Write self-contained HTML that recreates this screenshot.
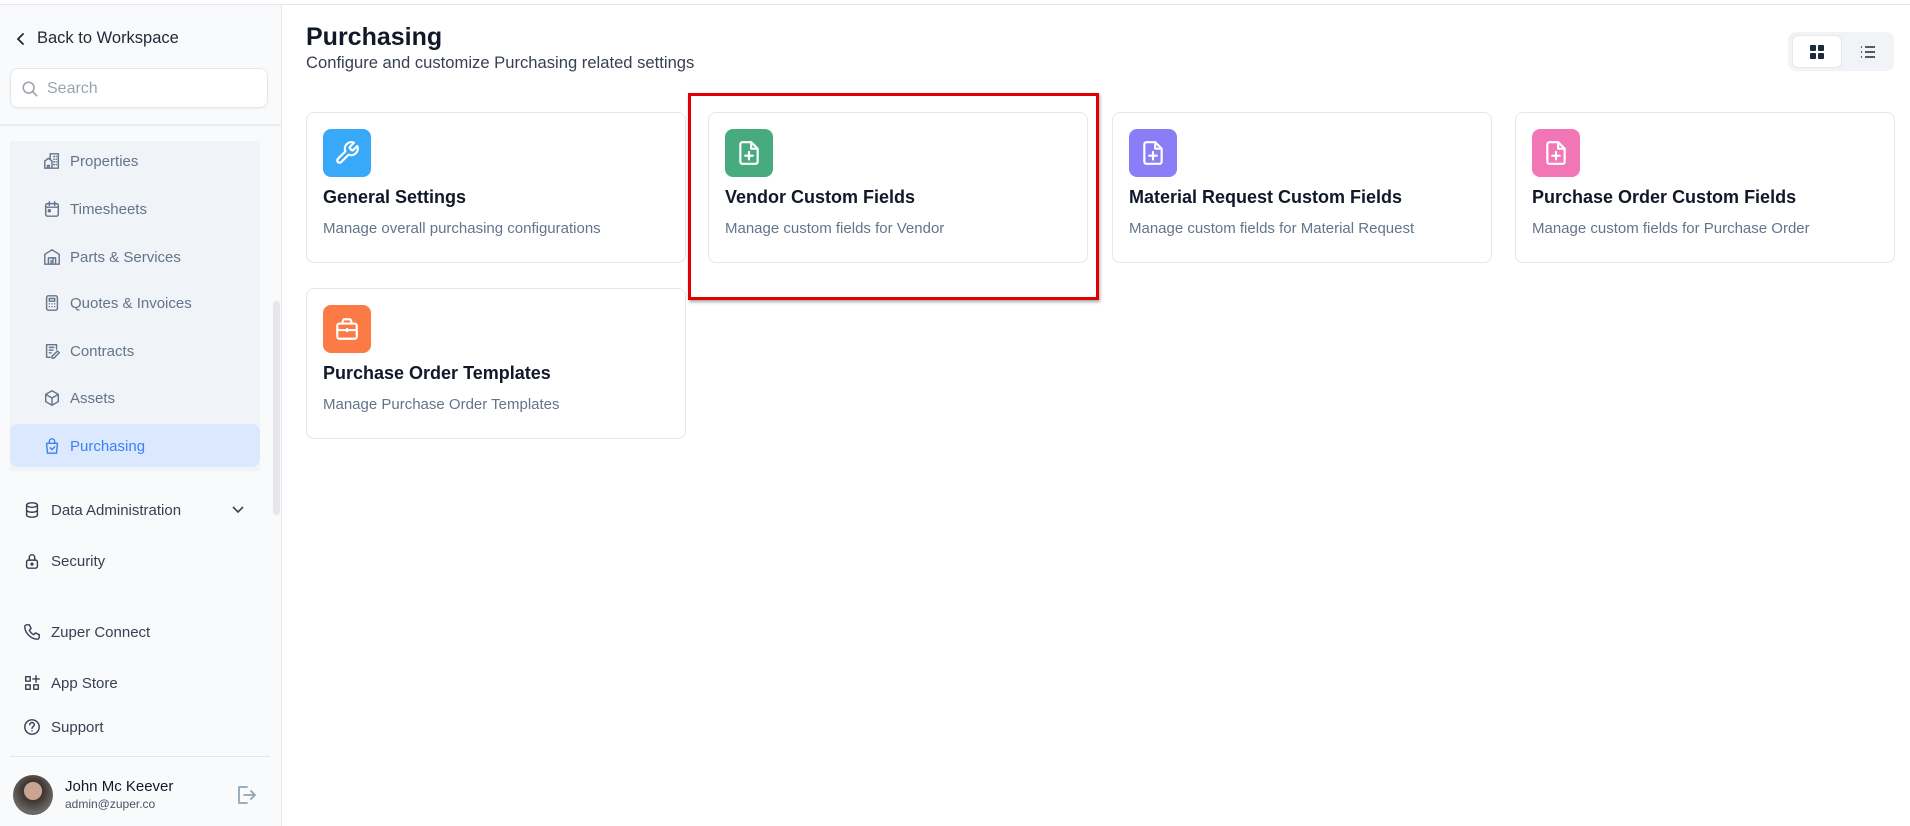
<!DOCTYPE html>
<html><head><meta charset="utf-8"><style>
*{box-sizing:border-box;margin:0;padding:0}
body{width:1910px;height:826px;overflow:hidden;background:#fff;font-family:"Liberation Sans",sans-serif;position:relative;color:#111827}
.abs{position:absolute}
.topline{left:0;top:0;width:1910px;height:5px;border-bottom:1px solid #e5e7eb;background:#fff}
.side{left:0;top:5px;width:282px;height:821px;background:#f8fafc;border-right:1px solid #e5e7eb}
.back{left:15px;top:29px;font-size:16.5px;color:#1f2937;display:flex;align-items:center;gap:10px}
.search{left:10px;top:68px;width:258px;height:40px;background:#fff;border:1px solid #e5e7eb;border-radius:8px;box-shadow:0 1px 2px rgba(0,0,0,.05);display:flex;align-items:center;padding-left:10px;padding-top:2px;gap:8px;color:#9ca3af;font-size:16px}
.sep1{left:0;top:124px;width:281px;height:2px;background:#e9ecf0}
.group{left:10px;top:141px;width:250px;height:330px;background:#f0f3f8}
.nav{position:absolute;left:43px;display:flex;align-items:center;gap:9px;font-size:15px;color:#64748b;height:20px}
.nav svg{width:18px;height:18px;fill:none;stroke:#64748b;stroke-width:1.6;stroke-linecap:round;stroke-linejoin:round}
.active{left:10px;top:424px;width:250px;height:43px;background:#dbe8fd;border-radius:8px}
.nav.act{color:#3b82f6}.nav.act svg{stroke:#3b82f6}
.nav2{position:absolute;left:23px;display:flex;align-items:center;gap:10px;font-size:15px;color:#374151;height:20px}
.nav2 svg{width:18px;height:18px;fill:none;stroke:#374151;stroke-width:1.6;stroke-linecap:round;stroke-linejoin:round}
.scroll{left:273px;top:301px;width:7px;height:214px;background:#e5e7eb;border-radius:4px}
.sep2{left:10px;top:756px;width:260px;height:1px;background:#e2e5ea}
h1{position:absolute;left:306px;top:23px;font-size:25px;font-weight:bold;color:#111827}
.sub{left:306px;top:53px;font-size:16.6px;color:#374151}
.toggle{left:1788px;top:32px;width:106px;height:39px;background:#f1f3f6;border-radius:8px}
.tg1{left:1792px;top:35px;width:50px;height:33px;background:#fff;border-radius:6px;border:1px solid #e5e7eb}
.card{position:absolute;width:380px;height:151px;border:1px solid #e5e7eb;border-radius:8px;background:#fff}
.card .ic{position:absolute;left:16px;top:16px;width:48px;height:48px;border-radius:8px;display:flex;align-items:center;justify-content:center}
.card .ic svg{width:26px;height:26px;fill:none;stroke:#fff;stroke-width:2;stroke-linecap:round;stroke-linejoin:round}
.card .t{position:absolute;left:16px;top:74px;font-size:18px;font-weight:bold;color:#111827}
.card .d{position:absolute;left:16px;top:107px;font-size:15px;color:#64748b}
.red{left:688px;top:93px;width:411px;height:207px;border:3px solid #e00000;box-shadow:1px 2px 3px rgba(0,0,0,.35)}
</style></head><body>
<div class="abs topline"></div>
<div class="abs side"></div>
<div class="abs back"><svg width="12" height="14" viewBox="0 0 12 14"><path d="M8 2 L3 7 L8 12" fill="none" stroke="#1f2937" stroke-width="1.8" stroke-linecap="round"/></svg>Back to Workspace</div>
<div class="abs search"><svg width="18" height="18" viewBox="0 0 20 20" fill="none" stroke="#9ca3af" stroke-width="1.8"><circle cx="8.5" cy="8.5" r="6"/><path d="M13 13l5 5"/></svg>Search</div>
<div class="abs sep1"></div>
<div class="abs group"></div>
<div class="abs active"></div>
<div class="abs scroll"></div>
<div class="nav" style="top:151px"><svg viewBox="0 0 20 20"><path d="M2 18V10l4-3 4 3v8H2zM8 8V2h9v16h-7M12 5h1M15 5h0M12 8h1M15 8h0M12 11h1M15 11h0M12 14h1M15 14h0M5 18v-3h2v3"/></svg>Properties</div>
<div class="nav" style="top:199px"><svg viewBox="0 0 20 20"><rect x="3" y="4" width="14" height="14" rx="2"/><path d="M3 8h14M7 2v4M13 2v4"/><rect x="6" y="11" width="2" height="2" fill="#64748b"/></svg>Timesheets</div>
<div class="nav" style="top:247px"><svg viewBox="0 0 20 20"><path d="M2 18V7l8-5 8 5v11H2zM6 18v-7h8v7M9 14v4M11 11v7"/></svg>Parts &amp; Services</div>
<div class="nav" style="top:293px"><svg viewBox="0 0 20 20"><rect x="4" y="2" width="12" height="16" rx="2"/><rect x="7" y="5" width="6" height="3"/><path d="M7 11h0M10 11h0M13 11h0M7 14h0M10 14h0M13 14h0"/></svg>Quotes &amp; Invoices</div>
<div class="nav" style="top:341px"><svg viewBox="0 0 20 20"><path d="M15 8V3H4v14h4M7 6h5M7 9h4M7 12h2M12 18l6-6-2-2-6 6v2h2z"/></svg>Contracts</div>
<div class="nav" style="top:388px"><svg viewBox="0 0 20 20"><path d="M10 2l7 4v8l-7 4-7-4V6l7-4zM3 6l7 4 7-4M10 10v8"/></svg>Assets</div>
<div class="nav act" style="top:436px"><svg viewBox="0 0 20 20"><path d="M4 7h12l-1 11H5L4 7zM7 7V5a3 3 0 016 0v2M8 12l2 2 3-3"/></svg>Purchasing</div>
<div class="nav2" style="top:500px"><svg viewBox="0 0 20 20"><ellipse cx="10" cy="4.5" rx="6" ry="2.5"/><path d="M4 4.5v11c0 1.4 2.7 2.5 6 2.5s6-1.1 6-2.5v-11M4 10c0 1.4 2.7 2.5 6 2.5s6-1.1 6-2.5"/></svg>Data Administration</div>
<svg class="abs" style="left:231px;top:504px" width="14" height="12" viewBox="0 0 14 12"><path d="M2 3l5 5 5-5" fill="none" stroke="#374151" stroke-width="1.6"/></svg>
<div class="nav2" style="top:551px"><svg viewBox="0 0 20 20"><rect x="4" y="9" width="12" height="9" rx="2"/><path d="M7 9V6a3 3 0 016 0v3"/><circle cx="10" cy="13.5" r="1" fill="#374151"/></svg>Security</div>
<div class="nav2" style="top:622px"><svg viewBox="0 0 20 20"><path d="M4 2h3l2 4-2 2c1 2 3 4 5 5l2-2 4 2v3c0 1-1 2-2 2C9 18 2 11 2 4c0-1 1-2 2-2z"/></svg>Zuper Connect</div>
<div class="nav2" style="top:673px"><svg viewBox="0 0 20 20"><rect x="3" y="3" width="5" height="5"/><rect x="3" y="12" width="5" height="5"/><rect x="12" y="12" width="5" height="5"/><path d="M14.5 2v7M11 5.5h7"/></svg>App Store</div>
<div class="nav2" style="top:717px"><svg viewBox="0 0 20 20"><circle cx="10" cy="10" r="8"/><path d="M7.5 7.5a2.5 2.5 0 115 0c0 2-2.5 2-2.5 4M10 14.5v0"/></svg>Support</div>
<div class="abs sep2"></div>
<div class="abs" style="left:13px;top:775px;width:40px;height:40px;border-radius:50%;background:radial-gradient(circle at 50% 40%,#c9a58f 0 28%,#3a3330 30%,#6f6a66 70%,#222 100%)"></div>
<div class="abs" style="left:65px;top:778px;font-size:15px;color:#111827">John Mc Keever</div>
<div class="abs" style="left:65px;top:797px;font-size:12px;color:#4b5563">admin@zuper.co</div>
<svg class="abs" style="left:235px;top:784px" width="22" height="22" viewBox="0 0 22 22" fill="none" stroke="#94a3b8" stroke-width="1.8" stroke-linecap="round" stroke-linejoin="round"><path d="M12 3H4v16h8M9 11h11M16 7l4 4-4 4"/></svg>

<h1>Purchasing</h1>
<div class="abs sub">Configure and customize Purchasing related settings</div>
<div class="abs toggle"></div><div class="abs tg1"></div>
<svg class="abs" style="left:1809px;top:44px" width="16" height="16" viewBox="0 0 16 16" fill="#1e293b"><rect x="1" y="1" width="6" height="6" rx="1"/><rect x="9" y="1" width="6" height="6" rx="1"/><rect x="1" y="9" width="6" height="6" rx="1"/><rect x="9" y="9" width="6" height="6" rx="1"/></svg>
<svg class="abs" style="left:1860px;top:44px" width="16" height="16" viewBox="0 0 16 16" stroke="#1e293b" stroke-width="1.6"><path d="M1 3h1M5 3h10M1 8h1M5 8h10M1 13h1M5 13h10"/></svg>

<div class="card" style="left:306px;top:112px"><div class="ic" style="background:#38a9f8"><svg viewBox="0 0 24 24"><path d="M14.7 6.3a1 1 0 000 1.4l1.6 1.6a1 1 0 001.4 0l3.77-3.77a6 6 0 01-7.940 7.94l-6.91 6.91a2.12 2.12 0 01-3-3l6.91-6.91a6 6 0 017.94-7.94l-3.76 3.76z"/></svg></div><div class="t">General Settings</div><div class="d">Manage overall purchasing configurations</div></div>
<div class="card" style="left:708px;top:112px"><div class="ic" style="background:#48ab80"><svg viewBox="0 0 24 24"><path d="M14 2H6a2 2 0 00-2 2v16a2 2 0 002 2h12a2 2 0 002-2V8z"/><path d="M14 2v6h6M12 11v7M8.5 14.5h7"/></svg></div><div class="t">Vendor Custom Fields</div><div class="d">Manage custom fields for Vendor</div></div>
<div class="card" style="left:1112px;top:112px"><div class="ic" style="background:#8b7cf8"><svg viewBox="0 0 24 24"><path d="M14 2H6a2 2 0 00-2 2v16a2 2 0 002 2h12a2 2 0 002-2V8z"/><path d="M14 2v6h6M12 11v7M8.5 14.5h7"/></svg></div><div class="t">Material Request Custom Fields</div><div class="d">Manage custom fields for Material Request</div></div>
<div class="card" style="left:1515px;top:112px"><div class="ic" style="background:#f276b6"><svg viewBox="0 0 24 24"><path d="M14 2H6a2 2 0 00-2 2v16a2 2 0 002 2h12a2 2 0 002-2V8z"/><path d="M14 2v6h6M12 11v7M8.5 14.5h7"/></svg></div><div class="t">Purchase Order Custom Fields</div><div class="d">Manage custom fields for Purchase Order</div></div>
<div class="card" style="left:306px;top:288px"><div class="ic" style="background:#fb7a45"><svg viewBox="0 0 24 24"><rect x="3" y="7" width="18" height="14" rx="2"/><path d="M8 7V5a2 2 0 012-2h4a2 2 0 012 2v2M3 13h18M12 12v2"/></svg></div><div class="t">Purchase Order Templates</div><div class="d">Manage Purchase Order Templates</div></div>
<div class="abs red"></div>
</body></html>
